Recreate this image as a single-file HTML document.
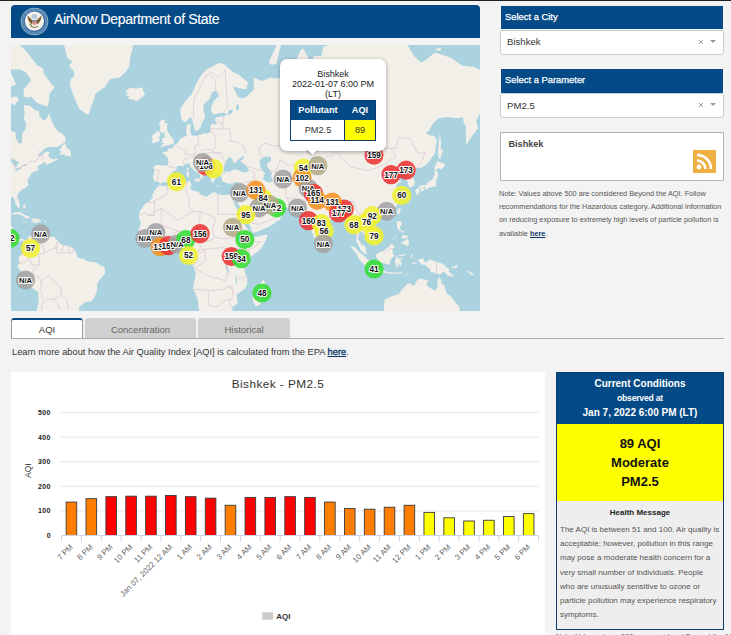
<!DOCTYPE html>
<html><head><meta charset="utf-8">
<style>
*{margin:0;padding:0;box-sizing:border-box}
html,body{width:731px;height:635px;overflow:hidden;background:#f3f3f3;font-family:"Liberation Sans",sans-serif;color:#333}
.a{position:absolute}
#topline{left:0;top:0;width:731px;height:1px;background:#222}
#hdr{left:11px;top:5px;width:469px;height:33px;background:#044a86;border-radius:4px 4px 0 0}
#hdr .t{left:43px;top:6.2px;font-size:14px;letter-spacing:-0.35px;color:#fff;white-space:nowrap;-webkit-text-stroke:0.12px #fff}
#map{left:11px;top:45px;width:469px;height:266px;background:#aad3df;overflow:hidden}
.sh{background:#044a86;color:#fff;font-size:9.4px;padding:0 0 0 4px;line-height:21.5px;white-space:nowrap;-webkit-text-stroke:0.25px #fff}
.sel{background:#fff;border:1px solid #ccc;border-radius:3px;font-size:9.6px;color:#333;padding-left:6px;white-space:nowrap}
.x{color:#999;font-size:10px}
.arr{width:0;height:0;border-left:3px solid transparent;border-right:3px solid transparent;border-top:3px solid #999}
#rss{left:500px;top:132px;width:224px;height:49px;background:#fff;border:1px solid #b5b5b5}
#note{left:499px;top:187px;width:230px;font-size:7.33px;line-height:13.2px;color:#555}
#note b{color:#0b3a6a;text-decoration:underline}
.tab{top:318px;height:21px;font-size:9.5px;text-align:center;line-height:21px;color:#666}
#tabline{left:11px;top:338px;width:713px;height:1px;background:#aaa}
#learn{left:12px;top:347px;font-size:9.3px;color:#333;white-space:nowrap}
#learn b{font-weight:normal;color:#0b3a6a;text-decoration:underline;-webkit-text-stroke:0.35px #0b3a6a}
#chart{left:11px;top:372px;width:534px;height:263px;background:#fff}
#cc{left:556px;top:372px;width:168px;height:258px;background:#eee;border:1px solid #0b3d6e}
#cch{left:0;top:0;width:166px;height:51px;background:#044a86;color:#fff;text-align:center;font-weight:bold}
#ccy{left:0;top:51px;width:166px;height:77px;background:#ffff00;color:#111;text-align:center;font-weight:bold;font-size:13px}
</style></head><body>
<div id="topline" class="a"></div>
<div id="hdr" class="a">
  <svg class="a" style="left:9px;top:2px" width="29" height="29" viewBox="0 0 29 29">
    <circle cx="14.5" cy="14.5" r="13.3" fill="#2f64a0" stroke="#8fb6c8" stroke-width="1.1"/>
    <circle cx="14.5" cy="14.5" r="11.4" fill="none" stroke="#5d89b8" stroke-width="2"/>
    <circle cx="14.4" cy="14.1" r="9.6" fill="#f4f2ea"/>
    <ellipse cx="14.4" cy="9.5" rx="3" ry="2.6" fill="#b9cbd8"/>
    <path d="M7.5,8.5 Q8,15 12,17.5 L13,14 Z" fill="#7a5a2a"/>
    <path d="M21.5,8.5 Q21,15 17,17.5 L16,14 Z" fill="#7a5a2a"/>
    <path d="M8.5,16.5 Q10,19 12.5,19.5 L11.5,17.5 Z" fill="#7f9a5a"/>
    <rect x="12.6" y="13.2" width="3.8" height="1.4" fill="#3d5f9c"/>
    <path d="M12.6,14.6 H16.4 V17 Q14.5,19.2 12.6,17 Z" fill="#e08a8a"/>
    <path d="M11,19.5 Q14.5,21.5 18,19.5" stroke="#6a5030" stroke-width="0.9" fill="none"/>
  </svg>
  <div class="a t">AirNow Department of State</div>
</div>
<div id="map" class="a"><svg class="a" style="left:0;top:0" width="469" height="266"><rect width="469" height="266" fill="#aad3df"/><g style="filter:blur(0.4px)"><path d="M-19.3,-7.2L-0.5,-3.6L8.9,-0.1L16.5,7.8L25.9,19.9L31.6,23.3L33.5,29.8L41.0,39.8L43.8,42.2L38.2,49.1L38.2,55.6L36.3,61.8L31.6,59.8L25.9,58.1L20.3,51.7L16.5,52.6L12.7,51.3L12.7,44.6L20.3,34.9L14.6,27.1L8.9,24.4L-0.5,24.4L-19.3,18.7ZM-4.2,53.5L5.2,51.3L8.0,54.3L3.3,60.6L-2.4,55.6ZM-28.8,34.9L-9.9,32.4L-0.5,27.1L5.2,39.8L-2.4,42.2L-6.1,53.5L-15.6,65.7L-17.4,75.1L-14.6,80.4L-6.1,82.1L-0.5,86.2L4.6,87.1L4.8,93.6L8.0,98.2L10.8,98.2L11.2,88.8L14.6,83.8L15.0,76.9L12.7,74.4L13.7,69.6L12.7,60.2L18.4,60.6L22.1,63.4L25.0,65.7L27.8,65.7L28.7,71.4L32.5,75.8L35.3,74.0L38.2,68.4L41.0,76.9L43.8,82.1L46.7,86.2L51.4,88.8L54.2,92.0L54.8,96.0L51.9,98.5L46.7,102.1L39.1,102.1L34.4,102.9L29.7,107.5L26.9,110.6L28.7,111.2L35.3,106.4L38.5,107.0L37.2,111.2L39.1,113.1L43.3,114.7L45.1,113.1L46.7,114.5L40.1,117.7L35.3,120.0L34.4,116.6L32.5,117.9L28.7,119.8L26.3,122.4L27.8,124.9L25.0,125.9L21.2,127.4L20.3,128.7L18.6,132.1L17.4,133.1L16.5,136.6L17.4,140.1L15.0,142.4L11.8,144.0L8.0,147.4L6.1,150.9L8.0,156.8L8.9,160.0L8.4,162.5L7.1,162.9L5.6,160.6L3.9,157.9L3.7,154.6L1.4,152.3L-2.4,151.8L-9.9,153.6L-28.8,156.8L-28.8,181.2L-6.1,181.6L-2.4,181.4L0.5,181.6L2.7,183.2L2.4,187.1L2.2,190.9L3.3,192.9L6.1,195.1L9.3,193.8L12.7,194.2L15.0,195.7L16.5,194.0L17.2,191.9L19.9,190.6L23.1,189.4L25.0,188.2L25.5,190.0L24.8,191.7L24.4,194.4L25.9,193.8L27.8,190.2L31.0,191.1L35.0,191.7L38.7,191.9L43.3,191.5L44.8,193.8L46.7,195.5L49.1,198.2L51.9,200.5L56.1,200.7L58.9,201.2L62.3,203.7L63.6,205.2L65.5,208.4L65.9,211.2L68.3,213.5L72.1,213.5L75.9,216.3L79.6,216.7L84.3,217.3L88.1,219.0L90.0,221.0L93.2,221.8L94.2,225.6L93.8,228.8L92.3,230.7L89.6,233.6L87.2,236.5L86.2,239.4L86.2,245.3L84.9,249.3L82.7,253.3L80.6,256.4L75.9,256.8L72.1,258.4L68.3,262.2L68.1,267.9L65.5,273.3L46.7,307.0L24.0,307.0L24.6,273.3L25.0,267.9L26.9,260.5L27.6,253.3L27.2,247.1L23.1,244.3L18.4,241.4L15.9,237.5L13.7,232.7L9.9,226.0L7.1,223.1L6.7,220.3L8.0,218.4L8.9,216.7L7.3,214.6L8.6,210.9L10.8,209.3L11.8,206.9L14.0,204.3L13.9,199.3L12.3,196.7L10.3,195.1L8.4,197.6L7.1,197.1L3.3,196.1L-1.8,193.0L-2.4,190.0L-5.6,187.1L-28.8,183.2ZM47.8,109.5L50.4,107.0L48.5,105.0L51.4,100.3L54.9,97.9L55.1,102.6L58.9,104.7L60.2,109.0L59.8,112.0L57.6,110.4L55.1,111.5L53.8,109.5ZM-0.3,169.5L3.3,167.4L8.9,167.0L13.7,169.7L17.2,171.3L19.9,172.9L14.6,173.5L13.3,171.9L9.9,170.1L5.2,168.9L1.8,169.7ZM19.5,173.7L22.5,173.5L27.8,173.9L30.8,176.1L27.8,176.9L24.6,177.9L19.3,176.7L22.7,176.3ZM12.2,176.5L15.9,177.3L14.8,177.7L12.3,176.9ZM33.1,176.3L36.1,176.5L35.7,177.3L33.1,177.3ZM12.7,159.3L14.6,159.8L14.2,163.1L12.3,164.1ZM22.1,-31.5L46.7,-75.5L103.2,-98.0L122.1,-75.5L137.1,-68.9L125.8,-22.8L123.9,-7.2L119.2,12.8L118.3,21.6L114.5,27.1L108.9,32.4L99.4,33.9L93.8,42.2L88.1,45.9L84.3,49.1L82.5,55.6L79.6,63.8L77.8,69.6L75.3,69.2L72.1,66.5L68.3,63.8L65.5,58.1L63.6,53.5L61.2,46.9L58.9,40.3L59.8,33.9L63.6,30.8L62.7,26.0L59.8,23.3L58.0,19.9L61.7,17.0L56.1,12.8L54.2,4.6L52.3,-3.6L46.7,-13.2L35.3,-14.7L22.1,-31.5ZM114.5,46.9L118.3,42.7L125.8,43.6L131.5,42.2L132.4,46.4L134.1,48.7L131.5,52.2L125.8,56.0L120.2,54.3L117.0,53.9L118.3,51.7L114.5,50.0L117.3,48.2ZM149.0,102.6L154.1,100.9L162.2,99.1L163.0,94.8L160.3,92.0L156.9,87.1L156.0,83.8L156.4,78.3L153.2,78.0L154.1,74.7L150.3,74.7L148.1,78.7L149.2,82.5L148.8,86.2L150.7,87.8L153.7,87.8L153.3,89.7L154.3,92.6L150.9,92.9L151.8,95.7L149.9,97.3L153.7,98.5L151.8,99.1ZM148.4,96.0L148.3,92.0L149.4,88.8L148.1,86.5L145.6,86.2L143.7,88.8L140.9,90.4L141.3,92.9L142.2,94.8L140.3,97.0L141.5,98.2L144.7,97.3ZM257.8,17.0L264.4,3.2L267.2,-7.2L276.6,-18.7L287.9,-27.1L272.9,-7.2L269.1,3.2L265.3,18.7L260.6,19.9ZM169.2,63.8L170.1,73.3L172.9,76.9L175.8,76.2L179.5,71.8L180.5,73.3L182.4,78.7L183.3,83.8L184.3,85.8L186.7,85.5L189.9,82.1L190.9,77.6L194.2,72.2L192.7,65.7L192.4,59.8L198.4,54.3L201.2,46.9L205.0,45.5L207.3,49.1L207.8,51.3L203.1,55.6L200.3,61.8L200.3,66.5L202.2,69.6L206.9,68.4L212.5,67.7L216.3,69.6L212.5,71.4L205.0,72.2L204.0,75.1L205.4,79.4L200.7,78.7L199.3,81.4L199.7,86.5L196.5,88.8L194.6,88.1L189.9,89.4L186.1,90.7L180.5,90.4L180.1,88.8L179.2,85.5L179.7,82.1L179.4,78.3L176.0,80.1L175.0,85.5L176.0,90.4L172.9,92.0L168.8,93.9L167.3,97.3L165.4,99.1L162.8,100.0L162.8,102.1L160.1,103.8L157.3,103.5L156.2,106.4L150.9,107.3L155.0,110.4L157.5,113.9L156.9,120.6L153.2,120.6L144.7,120.0L142.2,121.9L143.2,124.9L142.8,129.4L141.8,132.3L143.2,134.5L142.8,136.6L145.6,136.2L148.4,137.6L149.2,139.0L151.3,137.3L155.6,137.3L158.8,133.5L160.1,132.3L159.2,130.6L161.4,126.9L165.8,124.4L165.8,121.3L168.8,120.8L172.2,121.3L173.9,119.8L176.3,118.2L179.0,119.5L179.5,122.1L182.4,124.4L184.3,126.4L186.7,127.2L189.3,129.4L189.3,133.8L190.1,134.3L191.0,133.1L192.2,131.8L191.8,130.4L194.6,129.2L193.7,127.9L189.9,125.7L186.7,123.1L185.4,120.3L182.9,117.9L183.1,115.5L185.4,114.7L186.9,116.1L189.0,119.3L192.7,121.9L196.5,124.9L196.3,128.4L198.4,131.1L199.5,133.5L200.5,137.1L203.1,137.8L202.7,135.4L205.0,133.8L202.7,131.8L202.2,128.9L204.0,128.9L205.9,127.2L209.1,127.4L209.3,129.2L209.7,130.6L210.6,133.1L211.2,136.6L213.5,137.3L216.3,138.5L221.0,138.7L224.8,137.1L227.6,137.1L227.2,139.4L227.4,142.2L226.1,145.8L224.8,149.2L221.0,150.1L216.3,149.6L212.5,150.3L206.9,149.0L203.1,147.0L197.4,150.3L195.6,151.8L189.0,149.2L188.0,147.0L181.4,145.4L179.0,142.9L180.5,140.1L179.0,136.2L178.0,135.9L175.8,136.9L169.2,137.1L165.4,137.1L159.8,139.4L156.0,141.1L150.3,140.8L148.6,139.4L147.5,141.3L143.7,145.2L141.3,150.3L141.7,152.7L138.1,156.4L135.2,157.6L132.4,161.0L129.6,165.2L127.7,171.3L128.6,174.3L129.6,178.3L128.5,183.2L126.8,183.8L128.3,186.1L128.1,188.2L131.5,190.9L134.3,193.8L136.2,197.1L139.0,199.0L145.6,203.5L152.2,202.0L156.0,202.7L161.6,200.7L164.5,199.9L168.2,199.9L171.1,203.7L172.9,203.5L175.8,203.1L177.7,204.6L178.2,207.5L177.7,209.9L177.3,213.7L178.6,217.1L182.0,220.3L182.9,223.3L184.8,228.5L184.3,232.7L182.7,238.5L182.0,243.9L183.9,247.3L186.9,255.3L187.5,262.6L188.6,267.9L189.9,282.3L216.3,282.3L221.6,266.8L221.2,262.6L222.0,261.5L226.7,258.4L226.3,254.3L225.2,249.7L228.6,247.7L234.2,243.3L236.3,239.4L236.1,231.7L233.8,226.9L233.6,224.1L232.9,223.1L234.2,220.7L236.7,216.5L238.9,213.7L242.7,209.0L246.5,207.1L250.2,203.3L253.1,198.6L255.5,193.8L256.5,189.4L253.1,190.2L249.3,190.7L244.6,191.9L242.7,192.1L241.4,190.0L240.2,188.0L238.0,185.3L235.2,182.6L233.8,180.3L232.3,177.3L230.1,171.3L229.3,169.3L226.9,166.2L226.1,164.1L223.7,159.8L221.0,152.9L221.2,152.7L222.9,156.1L224.4,157.0L225.3,153.6L225.7,156.8L228.6,161.0L230.4,164.6L233.3,169.3L234.2,172.7L237.4,178.3L239.9,182.2L241.4,187.7L244.6,187.5L250.2,185.1L255.9,182.8L258.1,181.8L263.4,178.3L267.2,175.5L268.7,175.3L270.0,172.3L272.5,168.5L270.4,166.0L267.2,165.2L266.1,163.3L265.9,160.4L264.4,162.1L261.5,164.8L258.7,164.8L256.8,164.1L256.3,160.8L255.3,162.3L254.0,160.4L251.2,156.8L250.2,152.5L251.9,151.8L254.0,152.5L256.3,156.8L260.6,159.1L266.3,158.7L267.8,161.6L275.7,162.7L281.3,162.7L285.3,162.3L287.0,165.2L288.9,166.2L292.3,168.1L289.6,168.7L291.7,171.3L297.0,171.3L297.0,175.3L298.3,181.2L300.2,185.1L302.1,190.0L304.0,193.8L305.8,196.7L307.2,195.0L309.2,192.3L310.2,190.0L311.1,186.1L310.7,182.2L313.4,180.7L314.9,179.3L319.0,175.3L323.6,171.9L323.7,170.3L326.6,169.7L328.5,169.3L331.3,168.3L332.8,168.7L333.7,171.3L334.1,173.3L336.9,176.3L337.9,180.3L339.8,181.6L343.5,180.3L343.7,183.2L345.4,187.1L345.6,192.9L345.0,195.7L347.3,199.9L348.8,202.4L350.1,206.1L354.7,209.3L356.2,209.2L354.8,206.1L354.7,202.7L352.6,200.1L350.1,199.0L348.8,196.1L346.7,194.4L348.1,188.0L349.9,186.3L353.0,189.0L354.8,191.9L357.7,195.5L360.9,192.1L365.2,190.0L365.8,186.1L364.6,182.2L360.5,178.3L359.0,175.3L360.7,172.3L363.3,170.3L366.7,170.3L368.0,172.7L369.0,170.3L373.7,168.9L376.5,167.8L380.3,166.2L385.2,161.4L386.9,157.9L389.7,153.6L389.0,150.3L387.8,147.0L385.0,141.3L386.9,138.5L390.7,136.6L387.8,135.0L384.1,136.2L383.1,133.1L381.4,131.8L383.1,131.4L387.8,127.2L388.8,131.8L390.7,128.7L394.1,129.4L395.8,135.0L398.4,142.7L402.0,141.5L403.5,139.4L403.9,136.6L402.0,133.1L400.1,129.9L403.9,127.2L404.2,123.4L406.7,122.9L410.5,122.4L415.2,119.8L418.9,115.3L424.2,107.5L424.6,101.2L426.1,95.1L422.7,90.4L418.9,90.4L414.8,88.1L418.0,85.5L421.8,78.7L427.4,73.3L434.0,72.2L439.7,72.2L446.3,73.3L451.9,72.2L452.9,78.7L454.8,80.4L455.1,99.7L458.5,95.1L461.4,90.4L465.1,85.5L467.4,83.5L465.1,76.9L467.9,69.9L472.7,67.7L480.2,69.6L489.6,61.8L499.1,49.1L499.1,29.8L480.2,25.5L470.8,26.0L463.4,22.1L451.0,20.5L439.9,12.8L428.7,9.1L423.6,7.8L416.1,14.0L410.1,17.6L402.9,10.9L395.4,-2.2L385.9,-2.2L372.8,-4.3L367.1,-14.7L348.2,-18.7L323.7,-3.6L320.0,-0.1L312.4,1.2L310.6,10.9L302.1,10.9L304.0,29.8L308.7,32.4L304.9,34.9L300.2,37.4L296.4,42.2L298.3,32.4L296.4,21.6L297.4,12.8L291.7,3.2L288.9,6.5L285.7,14.0L287.9,19.9L287.9,32.4L282.3,28.2L274.7,25.5L271.0,32.4L263.4,33.4L259.7,32.4L251.2,35.9L246.5,33.9L242.7,32.4L242.7,44.6L236.1,51.3L231.4,53.5L227.6,52.2L225.3,49.1L222.0,41.3L224.8,42.2L229.5,43.6L235.2,44.6L237.0,37.4L227.6,29.8L222.0,27.1L212.5,18.7L207.8,18.1L201.2,21.6L195.6,24.4L191.8,28.2L188.0,33.4L184.3,40.8L180.5,49.5L174.8,55.6ZM423.6,4.6L430.2,2.6L429.3,5.9ZM310.2,200.1L310.4,196.3L310.9,193.2L312.8,195.7L314.1,198.2L313.6,199.9L311.7,200.7ZM386.1,167.2L387.5,169.5L388.8,168.3L389.7,163.1L388.8,162.5L386.3,165.2ZM364.5,174.9L367.1,173.1L369.0,173.9L368.0,176.3L366.2,176.9L364.5,176.3ZM404.2,145.4L405.7,143.6L408.2,144.0L408.6,147.0L407.3,149.6L405.9,150.3L405.2,148.1ZM409.5,145.8L409.7,143.6L413.7,143.1L412.7,145.4L410.5,146.3ZM406.7,142.9L410.5,140.1L415.2,139.9L417.1,137.1L418.6,135.9L420.8,135.0L423.6,129.9L423.6,126.4L426.5,126.2L427.4,130.6L425.5,134.3L425.2,137.8L425.2,141.1L423.1,141.5L421.4,142.2L418.0,142.4L416.1,144.7L414.2,143.8L414.6,142.0L411.4,142.7L408.6,143.8ZM423.6,125.7L423.3,123.1L426.5,115.8L428.4,117.1L433.6,118.5L434.0,121.1L430.2,124.4L426.9,122.9L425.3,125.2ZM427.8,113.9L427.0,107.0L427.6,99.7L428.7,89.4L429.9,95.1L429.7,104.1L432.1,106.1L429.7,111.2L430.2,113.1ZM385.9,176.3L390.1,176.3L390.7,179.3L388.8,182.2L389.7,185.1L393.5,187.1L392.5,188.0L388.8,185.5L387.1,184.6L385.9,181.2ZM389.7,198.6L393.5,195.7L396.3,193.4L398.2,196.7L397.6,199.9L396.1,201.2L393.5,199.5ZM390.7,190.9L392.9,190.2L396.3,190.4L396.9,192.9L393.5,193.2L390.7,193.8ZM380.9,195.7L385.0,191.9L385.4,190.4L383.1,192.9ZM365.2,209.0L367.1,208.4L369.0,206.9L372.8,206.0L375.6,203.3L377.5,202.0L379.4,199.5L381.2,199.0L384.1,201.8L382.2,203.3L381.4,205.2L382.2,209.9L384.1,210.1L381.2,212.7L379.4,215.6L378.8,219.2L375.6,219.5L372.8,218.0L370.1,218.2L367.5,217.3L367.1,214.6L365.2,212.7ZM339.4,201.2L343.5,202.0L345.8,204.8L349.2,208.0L352.0,209.9L355.4,212.7L356.7,214.6L359.6,217.5L359.2,222.8L356.7,222.4L352.6,219.3L350.1,216.5L347.3,212.7L345.4,208.6L342.6,205.2ZM358.1,224.6L360.5,223.1L363.3,223.7L368.0,224.6L371.8,224.8L375.6,226.5L375.6,228.3L369.0,227.3L363.3,226.5L359.6,225.8ZM376.5,227.3L384.1,227.5L391.6,227.5L391.6,228.5L382.2,228.8L376.5,228.5ZM393.5,229.8L399.1,227.5L397.3,228.8L393.5,231.1ZM385.0,222.2L384.8,218.4L383.7,216.9L385.2,211.8L386.9,210.7L389.7,209.9L394.4,209.0L395.4,209.3L391.6,211.0L386.9,211.0L386.5,213.3L388.8,213.5L392.4,213.5L389.3,215.2L390.7,218.4L389.7,220.9L387.8,219.7L386.9,217.5L386.7,222.2ZM400.1,208.0L401.0,209.9L402.3,209.0L401.0,211.8L402.0,213.3L400.1,212.7ZM401.0,217.5L406.3,217.8L404.8,219.0L401.0,218.6ZM406.7,214.6L412.3,213.3L414.2,218.0L418.9,214.6L425.5,216.7L432.1,219.0L435.0,222.2L438.4,223.7L437.8,226.9L440.6,228.8L443.6,231.7L436.8,230.7L433.1,226.5L429.3,229.2L425.5,229.0L421.8,227.1L419.9,227.7L418.9,224.1L414.2,220.3L410.5,219.3L408.6,217.3ZM439.7,222.2L443.4,221.2L446.3,219.7L446.6,222.2L442.5,223.5ZM372.8,262.6L373.7,254.3L375.6,253.9L379.7,251.5L384.1,250.3L387.8,249.3L390.3,245.3L392.5,242.9L395.4,239.8L398.8,238.1L401.4,240.4L403.9,240.2L405.2,236.5L406.7,235.0L409.7,233.6L414.2,235.0L417.6,235.2L416.1,237.5L415.2,240.4L418.9,242.8L422.3,245.1L425.2,245.1L426.7,240.4L426.5,236.1L428.4,232.1L430.2,235.6L430.8,239.0L433.6,240.2L434.0,243.3L435.5,248.3L440.0,251.3L442.5,254.7L445.3,258.4L448.2,261.5L449.1,267.9L449.3,275.5L442.5,289.3L376.5,282.3ZM252.7,234.6L254.9,241.4L253.1,244.3L251.2,250.3L249.3,259.5L244.6,261.5L242.1,256.4L241.4,253.3L243.6,248.3L242.7,244.3L247.0,242.2L250.0,237.5ZM220.6,142.0L222.0,140.6L224.8,139.9L223.8,141.5L222.0,142.2ZM204.0,140.6L209.3,140.8L208.8,141.3L205.0,141.3ZM183.1,134.7L184.3,133.8L189.2,133.5L188.2,136.6L184.6,136.4ZM175.2,127.2L177.7,126.4L178.2,129.4L177.7,131.8L175.8,131.8L175.6,129.4ZM176.0,123.4L177.5,121.9L177.7,124.4L176.9,125.9L176.0,124.9ZM455.7,225.0L459.5,226.9L462.9,229.8L461.4,230.4L456.6,226.9Z" fill="#f2efe9"/><path d="M212.5,126.4L213.5,120.6L213.7,118.5L215.7,115.8L217.2,112.6L219.1,112.3L221.0,113.9L222.9,116.1L221.0,115.5L222.9,118.2L225.7,117.1L225.7,115.8L226.7,115.3L229.5,112.6L233.3,110.6L231.8,113.9L230.4,115.8L228.7,115.5L230.4,117.4L232.3,118.5L235.2,120.8L238.2,125.4L235.2,127.2L231.4,126.9L227.6,125.2L225.7,124.4L222.0,124.7L218.6,126.7L214.4,126.4ZM252.1,112.6L255.9,111.2L259.7,111.7L260.2,115.8L256.5,117.9L255.9,121.3L258.7,124.4L259.7,126.9L261.2,128.2L259.7,131.1L261.5,134.3L261.4,136.6L257.8,137.6L254.6,136.2L252.1,134.3L253.1,129.4L254.8,128.7L253.1,127.4L251.4,124.9L249.3,121.9L249.3,117.9L248.0,117.7L249.3,114.7ZM209.7,128.4L214.4,126.9L215.4,127.7L211.6,128.7ZM216.3,69.6L218.2,64.6L222.0,65.0L221.6,67.7L218.2,69.9ZM224.8,65.0L225.7,58.9L228.0,60.6L227.6,65.0ZM298.3,115.3L301.1,112.0L308.7,112.6L306.8,113.4L301.1,113.4ZM355.4,97.9L358.6,95.1L364.3,88.8L366.7,84.8L366.2,86.5L362.4,93.6L357.7,97.3ZM219.3,212.4L221.0,211.2L223.8,211.8L224.2,213.7L222.0,216.5L219.7,215.0ZM214.8,218.0L217.2,224.1L218.6,227.9L217.6,228.3L215.4,224.5L214.4,220.3ZM223.8,229.8L225.5,233.6L226.1,239.0L225.0,238.5L224.4,234.6ZM185.2,187.1L187.1,185.7L187.1,187.5L185.8,187.9ZM-0.1,114.5L2.4,114.2L5.2,116.1L8.0,116.9L5.7,121.3L4.2,121.9L1.4,118.5L-0.1,116.6ZM2.5,125.2L7.1,122.9L10.8,122.1L9.9,123.6L6.1,125.7ZM9.3,121.1L14.6,119.3L16.1,120.6L12.7,121.1ZM-13.7,111.7L-8.0,107.0L-2.4,106.1L0.5,111.2L-4.2,112.6ZM20.3,101.2L22.1,98.8L21.2,101.5Z" fill="#aad3df"/><path d="M-19.3,105.5L-8.0,108.4L0.5,112.6L4.2,115.8L4.2,124.4L10.8,122.1L10.8,121.1L16.5,119.3L18.9,116.6L25.0,116.6L27.8,112.0L29.7,110.1L31.9,111.2L31.9,116.1M24.0,189.0L23.1,198.6L32.5,200.5L33.5,208.0L27.8,209.0L28.7,219.7L22.1,225.0L23.1,230.7L28.7,232.7L29.7,236.5L30.6,240.4L29.7,245.3L31.6,253.3L33.5,256.4L30.6,260.5L30.6,266.8M10.8,209.0L17.4,211.8L18.4,213.7L21.2,220.3L27.8,219.3L28.7,219.7M7.1,218.4L12.7,217.5L18.0,213.7M29.7,236.5L37.2,230.7L44.8,237.5L50.4,244.3L50.4,250.3L42.9,254.3L35.3,254.3M46.7,195.7L44.8,202.4L46.7,208.0L54.2,208.0L61.7,207.7L62.7,203.7M52.3,200.5L50.4,208.0M58.0,200.8L58.0,207.7M33.5,208.0L39.1,204.3L46.7,202.4M50.4,250.3L56.1,255.3L57.0,261.5L58.0,264.7M42.9,254.3L46.7,258.4L49.5,264.7M156.4,141.3L156.9,148.1L150.3,152.5L143.4,155.5L143.4,157.4L135.2,157.4M143.4,157.4L143.4,170.3L137.1,170.7L135.2,167.2L128.6,170.7M137.1,170.7L150.3,163.1L167.3,175.3L182.4,166.2L188.0,166.2L205.0,173.3M175.8,136.6L174.8,145.8L177.7,152.5L178.6,163.1L182.4,166.2M206.9,149.0L206.9,169.3L229.5,169.3M205.0,173.3L201.2,183.2L203.1,191.9L210.6,193.8L222.0,192.9L225.7,191.9M224.8,192.9L227.6,185.1L229.5,183.2L233.3,184.2L240.8,188.0M239.9,190.9L244.6,196.7L250.2,196.7L242.7,202.4L238.0,204.3L233.3,205.2L227.6,203.3L223.8,203.3M238.0,204.3L237.0,214.6M223.8,213.7L234.2,220.7M216.3,214.6L217.2,209.0L219.1,204.6L223.8,203.3M236.1,231.7L225.7,233.6M183.3,223.1L189.9,226.9L201.2,232.7L205.0,232.7L210.6,234.6L214.4,236.5L216.3,226.9L215.4,221.2L214.4,214.6L216.3,214.6M182.4,244.3L197.4,245.3L204.0,246.3M197.4,246.3L197.4,254.3L197.4,260.5M201.2,245.3L212.5,244.3L216.3,241.4L222.0,242.4M216.3,241.4L222.0,244.3L221.0,253.3L218.2,254.9M197.4,260.5L206.9,261.5L214.4,254.9L218.2,254.9L220.1,263.6M164.8,199.9L166.3,190.0L167.3,186.1L178.6,186.5L185.2,185.5L187.1,189.0L184.3,196.7L181.4,199.5L176.1,203.1M187.1,189.0L188.0,196.7L189.9,202.4L187.1,206.1L189.9,208.0L193.7,205.2L194.6,215.6L189.9,219.3L183.3,223.1M178.2,207.5L181.1,207.7L181.4,209.9L186.1,209.0L187.1,216.5L182.0,220.3M137.1,183.2L150.3,180.3L150.3,163.1M189.0,166.2L189.0,173.3L185.2,185.5M187.1,193.8L193.7,196.7L203.1,193.8M189.9,204.3L195.6,204.3L205.0,203.3L211.6,202.4L218.2,204.6M150.3,180.3L159.8,183.2L167.3,186.1M137.1,183.2L138.1,188.0L144.7,192.9L150.3,191.9L154.1,190.9L159.8,190.9L161.6,189.0L167.3,186.1M144.7,192.9L144.7,197.6L145.6,203.5M154.1,190.9L154.5,202.4M159.8,190.9L162.0,200.5M240.8,178.3L248.3,179.3L257.8,175.3L264.7,173.3M263.4,168.3L265.3,164.1M228.6,152.5L233.3,148.1L238.9,150.3L246.5,154.6L250.2,154.6M250.2,152.5L246.5,145.8L245.5,141.3L243.6,135.9M228.6,138.3L238.9,136.2L243.6,135.9L242.7,130.6L244.2,130.1M233.3,148.1L232.3,144.7L238.9,136.2M226.9,145.8L228.6,152.5L225.7,153.6M274.7,136.6L274.7,152.5L276.6,153.6L278.5,162.7M274.7,152.5L278.5,153.6L284.2,153.6L286.0,150.3L290.8,144.7L293.6,139.0L299.2,136.6L302.1,136.6M287.9,165.2L291.7,163.1L293.6,157.9L299.2,148.1L301.1,141.3L304.9,140.1M261.4,136.6L265.3,134.3L272.9,135.4L274.7,136.6L280.4,133.1L285.1,135.4L291.7,135.4L299.2,136.6M258.7,125.7L265.3,126.2L269.1,115.3L274.7,117.9L276.6,120.6L283.2,120.0L287.9,126.9L293.6,123.1L299.2,122.4L310.6,122.4L311.5,116.6L316.2,111.2L320.9,111.2L324.7,105.5M324.7,105.5L310.6,100.3L304.9,90.4L297.4,90.4L291.7,87.1L282.3,88.8L274.7,92.0L274.7,99.7L263.4,101.2L254.0,98.2L248.3,102.6L248.3,109.2L252.1,112.6M324.7,105.5L333.2,101.2L344.5,96.7L352.0,101.2L361.4,102.6L369.0,104.1L378.4,103.2L385.0,103.2M324.7,105.5L331.3,113.9L340.7,121.9L357.7,125.7L370.9,120.6L385.0,111.2L380.3,104.1M385.0,102.6L387.8,92.6L399.1,93.6L406.7,108.4L414.2,107.3L410.5,116.6L406.7,121.9L405.9,123.4M394.1,129.4L398.2,125.7L402.9,124.4L405.9,123.4M310.6,122.4L303.0,128.4L299.2,131.8L301.1,136.6L304.9,140.1M306.8,140.1L308.7,147.0L312.4,152.5L318.1,155.7L325.6,157.9L333.2,157.2L342.6,156.4M312.4,152.5L310.6,155.7L318.1,158.9L325.6,160.0M342.6,156.8L345.4,165.2L349.2,170.3L352.0,168.3L359.6,167.6L363.3,170.3M345.4,192.9L346.4,183.2L345.4,179.3L348.2,173.3L350.1,170.3M348.2,173.3L351.1,178.3L355.8,177.3L358.6,183.2L353.0,185.1L353.0,189.0M352.0,168.3L355.8,173.3L360.5,179.3L362.4,184.2L359.6,190.9M325.6,160.0L327.5,169.3M334.1,171.3L333.2,164.1L327.5,161.0M334.1,171.3L336.0,165.2L338.8,160.0L343.5,156.8M350.1,199.5L352.0,200.5M204.0,96.7L204.0,89.4L199.3,86.5M235.2,108.4L231.4,99.7L223.8,96.7L218.2,95.7M219.1,96.7L220.1,92.0L218.2,83.8L212.5,83.8L211.6,78.7L212.5,71.4M199.3,83.8L208.8,83.8L212.5,83.8M200.3,78.7L206.9,76.9L211.6,78.7M212.5,67.7L216.3,61.8L215.4,44.6L214.4,29.8L213.5,24.4M182.4,73.3L182.4,63.8L183.3,53.5L188.0,44.6L193.7,32.4L197.4,29.8L199.3,27.1M205.0,45.5L204.0,34.9L198.4,29.8M199.3,27.1L206.9,32.4L212.5,27.1M156.4,121.1L165.8,123.4M173.9,109.5L175.2,105.5L171.4,104.1L168.2,102.6L164.5,99.7M186.7,90.7L187.5,96.7L188.0,99.7L182.9,101.8L185.2,106.7L183.7,109.2L178.6,109.8L176.0,109.0L173.9,109.5M172.9,119.8L172.6,115.3L173.1,113.9L176.7,113.9L179.5,112.6L183.3,111.2L185.6,112.6M143.0,124.7L148.1,125.4L146.6,131.8L145.8,136.2M185.6,112.6L190.9,112.6L195.6,114.2L201.2,119.3L202.2,123.6L198.4,124.4L199.3,127.4L203.1,126.2L208.8,125.2L212.5,124.4M202.2,108.4L209.7,107.5L212.9,115.3L215.7,115.8M189.9,105.5L195.2,104.1L202.2,105.5L205.0,101.2L204.0,96.7M191.8,108.4L202.2,107.0L208.8,108.4M238.2,125.4L241.7,126.9L244.2,130.1M230.4,116.6L235.2,120.8L247.4,124.9L252.1,124.9M-23.1,161.2L-36.3,153.6M-13.7,184.2L-9.0,185.1L-6.1,186.1L-4.2,187.1L-0.5,185.1L2.4,183.2M-1.8,190.9L2.2,191.1M3.3,196.1L3.5,193.6M13.7,197.6L14.0,195.3M213.5,216.5L214.4,214.6L215.4,213.7M372.8,209.0L376.5,205.2L379.4,203.7L382.2,203.3M425.5,216.7L425.5,229.0M394.4,229.2L395.4,229.8" fill="none" stroke="#d6bccb" stroke-width="0.6"/></g><circle cx="-1.0" cy="193.3" r="9.6" fill="#33dd33" fill-opacity="0.88"/><circle cx="29.6" cy="188.9" r="9.6" fill="#a3a3a3" fill-opacity="0.88"/><circle cx="19.5" cy="203.4" r="9.6" fill="#f0f030" fill-opacity="0.88"/><circle cx="14.5" cy="235.0" r="9.6" fill="#a3a3a3" fill-opacity="0.88"/><circle cx="165.4" cy="136.7" r="9.6" fill="#f0f030" fill-opacity="0.88"/><circle cx="195.0" cy="121.0" r="9.6" fill="#ee3333" fill-opacity="0.88"/><circle cx="202.6" cy="123.6" r="9.6" fill="#f0f030" fill-opacity="0.88"/><circle cx="191.5" cy="117.5" r="9.6" fill="#a3a3a3" fill-opacity="0.88"/><circle cx="133.8" cy="193.5" r="9.6" fill="#a3a3a3" fill-opacity="0.88"/><circle cx="144.8" cy="187.5" r="9.6" fill="#a3a3a3" fill-opacity="0.88"/><circle cx="149.2" cy="201.7" r="9.6" fill="#f59322" fill-opacity="0.88"/><circle cx="157.4" cy="200.6" r="9.6" fill="#ee3333" fill-opacity="0.88"/><circle cx="166.1" cy="199.0" r="9.6" fill="#a3a3a3" fill-opacity="0.88"/><circle cx="174.9" cy="194.6" r="9.6" fill="#33dd33" fill-opacity="0.88"/><circle cx="189.1" cy="188.6" r="9.6" fill="#ee3333" fill-opacity="0.88"/><circle cx="177.6" cy="210.5" r="9.6" fill="#f0f030" fill-opacity="0.88"/><circle cx="228.5" cy="147.7" r="9.6" fill="#a3a3a3" fill-opacity="0.88"/><circle cx="252.0" cy="153.5" r="9.6" fill="#f0f030" fill-opacity="0.88"/><circle cx="244.9" cy="145.2" r="9.6" fill="#f59322" fill-opacity="0.88"/><circle cx="265.7" cy="162.8" r="9.6" fill="#33dd33" fill-opacity="0.88"/><circle cx="258.7" cy="159.6" r="9.6" fill="#b3ad8a" fill-opacity="0.88"/><circle cx="248.0" cy="162.8" r="9.6" fill="#a3a3a3" fill-opacity="0.88"/><circle cx="234.8" cy="169.7" r="9.6" fill="#f0f030" fill-opacity="0.88"/><circle cx="221.6" cy="182.3" r="9.6" fill="#b3ad8a" fill-opacity="0.88"/><circle cx="233.8" cy="194.5" r="9.6" fill="#33dd33" fill-opacity="0.88"/><circle cx="220.3" cy="211.5" r="9.6" fill="#ee3333" fill-opacity="0.88"/><circle cx="230.2" cy="213.6" r="9.6" fill="#33dd33" fill-opacity="0.88"/><circle cx="251.0" cy="248.0" r="9.6" fill="#33dd33" fill-opacity="0.88"/><circle cx="272.0" cy="134.0" r="9.6" fill="#a3a3a3" fill-opacity="0.88"/><circle cx="286.5" cy="163.0" r="9.6" fill="#a3a3a3" fill-opacity="0.88"/><circle cx="292.3" cy="123.0" r="9.6" fill="#f0f030" fill-opacity="0.88"/><circle cx="306.8" cy="120.7" r="9.6" fill="#b3ad8a" fill-opacity="0.88"/><circle cx="291.0" cy="132.7" r="9.6" fill="#f59322" fill-opacity="0.88"/><circle cx="297.3" cy="143.4" r="9.6" fill="#a3a3a3" fill-opacity="0.88"/><circle cx="302.4" cy="148.4" r="9.6" fill="#ee3333" fill-opacity="0.88"/><circle cx="306.2" cy="155.3" r="9.6" fill="#f59322" fill-opacity="0.88"/><circle cx="333.2" cy="164.2" r="9.6" fill="#ee3333" fill-opacity="0.88"/><circle cx="321.3" cy="157.2" r="9.6" fill="#f59322" fill-opacity="0.88"/><circle cx="327.6" cy="168.0" r="9.6" fill="#ee3333" fill-opacity="0.88"/><circle cx="297.5" cy="175.6" r="9.6" fill="#ee3333" fill-opacity="0.88"/><circle cx="313.1" cy="185.9" r="9.6" fill="#f0f030" fill-opacity="0.88"/><circle cx="310.2" cy="178.5" r="9.6" fill="#f0f030" fill-opacity="0.88"/><circle cx="312.3" cy="198.6" r="9.6" fill="#a3a3a3" fill-opacity="0.88"/><circle cx="342.9" cy="179.6" r="9.6" fill="#f0f030" fill-opacity="0.88"/><circle cx="363.0" cy="110.1" r="9.6" fill="#ee3333" fill-opacity="0.88"/><circle cx="380.0" cy="129.6" r="9.6" fill="#ee3333" fill-opacity="0.88"/><circle cx="395.1" cy="125.2" r="9.6" fill="#ee3333" fill-opacity="0.88"/><circle cx="390.7" cy="150.4" r="9.6" fill="#f0f030" fill-opacity="0.88"/><circle cx="375.6" cy="166.3" r="9.6" fill="#a3a3a3" fill-opacity="0.88"/><circle cx="361.2" cy="170.7" r="9.6" fill="#f0f030" fill-opacity="0.88"/><circle cx="355.5" cy="177.1" r="9.6" fill="#f0f030" fill-opacity="0.88"/><circle cx="363.1" cy="190.9" r="9.6" fill="#f0f030" fill-opacity="0.88"/><circle cx="363.1" cy="224.0" r="9.6" fill="#33dd33" fill-opacity="0.88"/><text x="-1.0" y="196.2" text-anchor="middle" font-size="8.2" font-weight="bold" fill="#111" stroke="#fff" stroke-width="2" paint-order="stroke" stroke-linejoin="round">42</text><text x="29.6" y="191.8" text-anchor="middle" font-size="7.6" font-weight="bold" fill="#111" stroke="#fff" stroke-width="2" paint-order="stroke" stroke-linejoin="round">N/A</text><text x="19.5" y="206.3" text-anchor="middle" font-size="8.2" font-weight="bold" fill="#111" stroke="#fff" stroke-width="2" paint-order="stroke" stroke-linejoin="round">57</text><text x="14.5" y="237.9" text-anchor="middle" font-size="7.6" font-weight="bold" fill="#111" stroke="#fff" stroke-width="2" paint-order="stroke" stroke-linejoin="round">N/A</text><text x="165.4" y="139.6" text-anchor="middle" font-size="8.2" font-weight="bold" fill="#111" stroke="#fff" stroke-width="2" paint-order="stroke" stroke-linejoin="round">61</text><text x="195.0" y="123.9" text-anchor="middle" font-size="8.2" font-weight="bold" fill="#111" stroke="#fff" stroke-width="2" paint-order="stroke" stroke-linejoin="round">106</text><text x="202.6" y="126.5" text-anchor="middle" font-size="8.2" font-weight="bold" fill="#111" stroke="#fff" stroke-width="2" paint-order="stroke" stroke-linejoin="round"></text><text x="191.5" y="120.4" text-anchor="middle" font-size="7.6" font-weight="bold" fill="#111" stroke="#fff" stroke-width="2" paint-order="stroke" stroke-linejoin="round">N/A</text><text x="133.8" y="196.4" text-anchor="middle" font-size="7.6" font-weight="bold" fill="#111" stroke="#fff" stroke-width="2" paint-order="stroke" stroke-linejoin="round">N/A</text><text x="144.8" y="190.4" text-anchor="middle" font-size="7.6" font-weight="bold" fill="#111" stroke="#fff" stroke-width="2" paint-order="stroke" stroke-linejoin="round">N/A</text><text x="149.2" y="204.6" text-anchor="middle" font-size="8.2" font-weight="bold" fill="#111" stroke="#fff" stroke-width="2" paint-order="stroke" stroke-linejoin="round">131</text><text x="157.4" y="203.5" text-anchor="middle" font-size="8.2" font-weight="bold" fill="#111" stroke="#fff" stroke-width="2" paint-order="stroke" stroke-linejoin="round">159</text><text x="166.1" y="201.9" text-anchor="middle" font-size="7.6" font-weight="bold" fill="#111" stroke="#fff" stroke-width="2" paint-order="stroke" stroke-linejoin="round">N/A</text><text x="174.9" y="197.5" text-anchor="middle" font-size="8.2" font-weight="bold" fill="#111" stroke="#fff" stroke-width="2" paint-order="stroke" stroke-linejoin="round">68</text><text x="189.1" y="191.5" text-anchor="middle" font-size="8.2" font-weight="bold" fill="#111" stroke="#fff" stroke-width="2" paint-order="stroke" stroke-linejoin="round">156</text><text x="177.6" y="213.4" text-anchor="middle" font-size="8.2" font-weight="bold" fill="#111" stroke="#fff" stroke-width="2" paint-order="stroke" stroke-linejoin="round">52</text><text x="228.5" y="150.6" text-anchor="middle" font-size="7.6" font-weight="bold" fill="#111" stroke="#fff" stroke-width="2" paint-order="stroke" stroke-linejoin="round">N/A</text><text x="252.0" y="156.4" text-anchor="middle" font-size="8.2" font-weight="bold" fill="#111" stroke="#fff" stroke-width="2" paint-order="stroke" stroke-linejoin="round">84</text><text x="244.9" y="148.1" text-anchor="middle" font-size="8.2" font-weight="bold" fill="#111" stroke="#fff" stroke-width="2" paint-order="stroke" stroke-linejoin="round">131</text><text x="265.7" y="165.7" text-anchor="middle" font-size="8.2" font-weight="bold" fill="#111" stroke="#fff" stroke-width="2" paint-order="stroke" stroke-linejoin="round">72</text><text x="258.7" y="162.5" text-anchor="middle" font-size="7.6" font-weight="bold" fill="#111" stroke="#fff" stroke-width="2" paint-order="stroke" stroke-linejoin="round">N/A</text><text x="248.0" y="165.7" text-anchor="middle" font-size="7.6" font-weight="bold" fill="#111" stroke="#fff" stroke-width="2" paint-order="stroke" stroke-linejoin="round">N/A</text><text x="234.8" y="172.6" text-anchor="middle" font-size="8.2" font-weight="bold" fill="#111" stroke="#fff" stroke-width="2" paint-order="stroke" stroke-linejoin="round">95</text><text x="221.6" y="185.2" text-anchor="middle" font-size="7.6" font-weight="bold" fill="#111" stroke="#fff" stroke-width="2" paint-order="stroke" stroke-linejoin="round">N/A</text><text x="233.8" y="197.4" text-anchor="middle" font-size="8.2" font-weight="bold" fill="#111" stroke="#fff" stroke-width="2" paint-order="stroke" stroke-linejoin="round">50</text><text x="220.3" y="214.4" text-anchor="middle" font-size="8.2" font-weight="bold" fill="#111" stroke="#fff" stroke-width="2" paint-order="stroke" stroke-linejoin="round">159</text><text x="230.2" y="216.5" text-anchor="middle" font-size="8.2" font-weight="bold" fill="#111" stroke="#fff" stroke-width="2" paint-order="stroke" stroke-linejoin="round">34</text><text x="251.0" y="250.9" text-anchor="middle" font-size="8.2" font-weight="bold" fill="#111" stroke="#fff" stroke-width="2" paint-order="stroke" stroke-linejoin="round">48</text><text x="272.0" y="136.9" text-anchor="middle" font-size="7.6" font-weight="bold" fill="#111" stroke="#fff" stroke-width="2" paint-order="stroke" stroke-linejoin="round">N/A</text><text x="286.5" y="165.9" text-anchor="middle" font-size="7.6" font-weight="bold" fill="#111" stroke="#fff" stroke-width="2" paint-order="stroke" stroke-linejoin="round">N/A</text><text x="292.3" y="125.9" text-anchor="middle" font-size="8.2" font-weight="bold" fill="#111" stroke="#fff" stroke-width="2" paint-order="stroke" stroke-linejoin="round">54</text><text x="306.8" y="123.6" text-anchor="middle" font-size="7.6" font-weight="bold" fill="#111" stroke="#fff" stroke-width="2" paint-order="stroke" stroke-linejoin="round">N/A</text><text x="291.0" y="135.6" text-anchor="middle" font-size="8.2" font-weight="bold" fill="#111" stroke="#fff" stroke-width="2" paint-order="stroke" stroke-linejoin="round">102</text><text x="297.3" y="146.3" text-anchor="middle" font-size="7.6" font-weight="bold" fill="#111" stroke="#fff" stroke-width="2" paint-order="stroke" stroke-linejoin="round">N/A</text><text x="302.4" y="151.3" text-anchor="middle" font-size="8.2" font-weight="bold" fill="#111" stroke="#fff" stroke-width="2" paint-order="stroke" stroke-linejoin="round">165</text><text x="306.2" y="158.2" text-anchor="middle" font-size="8.2" font-weight="bold" fill="#111" stroke="#fff" stroke-width="2" paint-order="stroke" stroke-linejoin="round">114</text><text x="333.2" y="167.1" text-anchor="middle" font-size="8.2" font-weight="bold" fill="#111" stroke="#fff" stroke-width="2" paint-order="stroke" stroke-linejoin="round">173</text><text x="321.3" y="160.1" text-anchor="middle" font-size="8.2" font-weight="bold" fill="#111" stroke="#fff" stroke-width="2" paint-order="stroke" stroke-linejoin="round">131</text><text x="327.6" y="170.9" text-anchor="middle" font-size="8.2" font-weight="bold" fill="#111" stroke="#fff" stroke-width="2" paint-order="stroke" stroke-linejoin="round">177</text><text x="297.5" y="178.5" text-anchor="middle" font-size="8.2" font-weight="bold" fill="#111" stroke="#fff" stroke-width="2" paint-order="stroke" stroke-linejoin="round">160</text><text x="313.1" y="188.8" text-anchor="middle" font-size="8.2" font-weight="bold" fill="#111" stroke="#fff" stroke-width="2" paint-order="stroke" stroke-linejoin="round">56</text><text x="310.2" y="181.4" text-anchor="middle" font-size="8.2" font-weight="bold" fill="#111" stroke="#fff" stroke-width="2" paint-order="stroke" stroke-linejoin="round">83</text><text x="312.3" y="201.5" text-anchor="middle" font-size="7.6" font-weight="bold" fill="#111" stroke="#fff" stroke-width="2" paint-order="stroke" stroke-linejoin="round">N/A</text><text x="342.9" y="182.5" text-anchor="middle" font-size="8.2" font-weight="bold" fill="#111" stroke="#fff" stroke-width="2" paint-order="stroke" stroke-linejoin="round">68</text><text x="363.0" y="113.0" text-anchor="middle" font-size="8.2" font-weight="bold" fill="#111" stroke="#fff" stroke-width="2" paint-order="stroke" stroke-linejoin="round">159</text><text x="380.0" y="132.5" text-anchor="middle" font-size="8.2" font-weight="bold" fill="#111" stroke="#fff" stroke-width="2" paint-order="stroke" stroke-linejoin="round">177</text><text x="395.1" y="128.1" text-anchor="middle" font-size="8.2" font-weight="bold" fill="#111" stroke="#fff" stroke-width="2" paint-order="stroke" stroke-linejoin="round">173</text><text x="390.7" y="153.3" text-anchor="middle" font-size="8.2" font-weight="bold" fill="#111" stroke="#fff" stroke-width="2" paint-order="stroke" stroke-linejoin="round">60</text><text x="375.6" y="169.2" text-anchor="middle" font-size="7.6" font-weight="bold" fill="#111" stroke="#fff" stroke-width="2" paint-order="stroke" stroke-linejoin="round">N/A</text><text x="361.2" y="173.6" text-anchor="middle" font-size="8.2" font-weight="bold" fill="#111" stroke="#fff" stroke-width="2" paint-order="stroke" stroke-linejoin="round">92</text><text x="355.5" y="180.0" text-anchor="middle" font-size="8.2" font-weight="bold" fill="#111" stroke="#fff" stroke-width="2" paint-order="stroke" stroke-linejoin="round">76</text><text x="363.1" y="193.8" text-anchor="middle" font-size="8.2" font-weight="bold" fill="#111" stroke="#fff" stroke-width="2" paint-order="stroke" stroke-linejoin="round">79</text><text x="363.1" y="226.9" text-anchor="middle" font-size="8.2" font-weight="bold" fill="#111" stroke="#fff" stroke-width="2" paint-order="stroke" stroke-linejoin="round">41</text></svg><div id="popup" class="a" style="left:269px;top:13.5px;width:106px;height:92px;background:#fff;border-radius:7px;box-shadow:0 1px 4px rgba(0,0,0,0.35)">
  <div class="a" style="left:0;top:10px;width:106px;text-align:center;font-size:9px;line-height:10.4px;color:#222">Bishkek<br>2022-01-07 6:00 PM<br>(LT)</div>
  <div class="a" style="left:10px;top:41.5px;width:86px;height:41px;border:1px solid #0b3d6e;background:#fff">
    <div class="a" style="left:0;top:0;width:84px;height:19px;background:#044a86"></div>
    <div class="a" style="left:0;top:4px;width:54px;text-align:center;color:#fff;font-weight:bold;font-size:9.2px">Pollutant</div>
    <div class="a" style="left:54px;top:4px;width:30px;text-align:center;color:#fff;font-weight:bold;font-size:9.2px">AQI</div>
    <div class="a" style="left:53px;top:19px;width:31px;height:20px;background:#ffff00;border-left:1px solid #0b3d6e"></div>
    <div class="a" style="left:0;top:24px;width:54px;text-align:center;color:#333;font-size:9.2px">PM2.5</div>
    <div class="a" style="left:54px;top:24px;width:30px;text-align:center;color:#333;font-size:9.2px">89</div>
  </div>
</div>
<div class="a" style="left:295px;top:104px;width:13px;height:8px;overflow:hidden"><div style="width:9px;height:9px;background:#fff;transform:translate(2px,-5px) rotate(45deg);box-shadow:0 1px 3px rgba(0,0,0,0.3)"></div></div></div>

<div class="a sh" style="left:501px;top:6px;width:222px;height:23px">Select a City</div>
<div class="a sel" style="left:500px;top:30px;width:224px;height:25px;line-height:22px">Bishkek</div>
<svg class="a" style="left:697px;top:38px" width="8" height="8"><path d="M2,2L6,6M6,2L2,6" stroke="#999" stroke-width="0.9"/></svg>
<div class="a arr" style="left:710px;top:40px"></div>

<div class="a sh" style="left:501px;top:69px;width:222px;height:24px;line-height:22.5px">Select a Parameter</div>
<div class="a sel" style="left:500px;top:93px;width:224px;height:25px;line-height:23px">PM2.5</div>
<svg class="a" style="left:697px;top:101px" width="8" height="8"><path d="M2,2L6,6M6,2L2,6" stroke="#999" stroke-width="0.9"/></svg>
<div class="a arr" style="left:710px;top:103px"></div>

<div id="rss" class="a">
  <div class="a" style="left:7.5px;top:6px;font-size:9.1px;font-weight:bold;color:#444">Bishkek</div>
  <svg class="a" style="left:192px;top:17px" width="23" height="23"><rect width="23" height="23" fill="#efb043"/><circle cx="6" cy="17" r="2.4" fill="#fff"/><path d="M4,10.5A8.5,8.5 0 0 1 12.5,19" stroke="#fff" stroke-width="2.6" fill="none"/><path d="M4,5A14,14 0 0 1 18,19" stroke="#fff" stroke-width="2.6" fill="none"/></svg>
</div>
<div id="note" class="a">Note: Values above 500 are considered Beyond the AQI. Follow recommendations for the Hazardous category. Additional information on reducing exposure to extremely high levels of particle pollution is available <b>here</b>.</div>

<div class="a tab" style="left:11px;width:72px;background:#fff;border:1px solid #999;border-top:2px solid #044a86;border-bottom:none;border-radius:3px 3px 0 0;color:#333;line-height:19px">AQI</div>
<div class="a tab" style="left:85px;width:111px;background:#d0d0d0;border-radius:3px 3px 0 0;line-height:23px">Concentration</div>
<div class="a tab" style="left:198px;width:92px;background:#d0d0d0;border-radius:3px 3px 0 0;line-height:23px">Historical</div>
<div id="tabline" class="a"></div>
<div id="learn" class="a">Learn more about how the Air Quality Index [AQI] is calculated from the EPA <b>here</b>.</div>

<div id="chart" class="a"><svg class="a" style="left:0;top:0" width="534" height="263">
<rect x="49.5" y="138.42" width="478.1" height="1" fill="#e6e6e6"/>
<text x="39.7" y="141.4" text-anchor="end" font-size="7" font-weight="bold" fill="#222" letter-spacing="0.3">100</text>
<rect x="49.5" y="113.84" width="478.1" height="1" fill="#e6e6e6"/>
<text x="39.7" y="116.8" text-anchor="end" font-size="7" font-weight="bold" fill="#222" letter-spacing="0.3">200</text>
<rect x="49.5" y="89.26" width="478.1" height="1" fill="#e6e6e6"/>
<text x="39.7" y="92.3" text-anchor="end" font-size="7" font-weight="bold" fill="#222" letter-spacing="0.3">300</text>
<rect x="49.5" y="64.68" width="478.1" height="1" fill="#e6e6e6"/>
<text x="39.7" y="67.7" text-anchor="end" font-size="7" font-weight="bold" fill="#222" letter-spacing="0.3">400</text>
<rect x="49.5" y="40.10" width="478.1" height="1" fill="#e6e6e6"/>
<text x="39.7" y="43.1" text-anchor="end" font-size="7" font-weight="bold" fill="#222" letter-spacing="0.3">500</text>
<text x="39.7" y="166.0" text-anchor="end" font-size="7" font-weight="bold" fill="#222">0</text>
<rect x="55.14" y="130.07" width="10.6" height="33.43" fill="#ff7e00" stroke="#3a3a3a" stroke-width="0.9"/>
<rect x="75.02" y="126.63" width="10.6" height="36.87" fill="#ff7e00" stroke="#3a3a3a" stroke-width="0.9"/>
<rect x="94.90" y="124.66" width="10.6" height="38.84" fill="#ff0000" stroke="#3a3a3a" stroke-width="0.9"/>
<rect x="114.78" y="124.17" width="10.6" height="39.33" fill="#ff0000" stroke="#3a3a3a" stroke-width="0.9"/>
<rect x="134.66" y="124.17" width="10.6" height="39.33" fill="#ff0000" stroke="#3a3a3a" stroke-width="0.9"/>
<rect x="154.54" y="123.43" width="10.6" height="40.07" fill="#ff0000" stroke="#3a3a3a" stroke-width="0.9"/>
<rect x="174.41" y="124.66" width="10.6" height="38.84" fill="#ff0000" stroke="#3a3a3a" stroke-width="0.9"/>
<rect x="194.29" y="126.14" width="10.6" height="37.36" fill="#ff0000" stroke="#3a3a3a" stroke-width="0.9"/>
<rect x="214.17" y="133.27" width="10.6" height="30.23" fill="#ff7e00" stroke="#3a3a3a" stroke-width="0.9"/>
<rect x="234.05" y="125.40" width="10.6" height="38.10" fill="#ff0000" stroke="#3a3a3a" stroke-width="0.9"/>
<rect x="253.93" y="125.40" width="10.6" height="38.10" fill="#ff0000" stroke="#3a3a3a" stroke-width="0.9"/>
<rect x="273.81" y="124.66" width="10.6" height="38.84" fill="#ff0000" stroke="#3a3a3a" stroke-width="0.9"/>
<rect x="293.69" y="125.40" width="10.6" height="38.10" fill="#ff0000" stroke="#3a3a3a" stroke-width="0.9"/>
<rect x="313.57" y="130.07" width="10.6" height="33.43" fill="#ff7e00" stroke="#3a3a3a" stroke-width="0.9"/>
<rect x="333.45" y="136.46" width="10.6" height="27.04" fill="#ff7e00" stroke="#3a3a3a" stroke-width="0.9"/>
<rect x="353.33" y="137.20" width="10.6" height="26.30" fill="#ff7e00" stroke="#3a3a3a" stroke-width="0.9"/>
<rect x="373.21" y="135.23" width="10.6" height="28.27" fill="#ff7e00" stroke="#3a3a3a" stroke-width="0.9"/>
<rect x="393.09" y="133.27" width="10.6" height="30.23" fill="#ff7e00" stroke="#3a3a3a" stroke-width="0.9"/>
<rect x="412.96" y="140.39" width="10.6" height="23.11" fill="#ffff00" stroke="#3a3a3a" stroke-width="0.9"/>
<rect x="432.84" y="145.80" width="10.6" height="17.70" fill="#ffff00" stroke="#3a3a3a" stroke-width="0.9"/>
<rect x="452.72" y="149.00" width="10.6" height="14.50" fill="#ffff00" stroke="#3a3a3a" stroke-width="0.9"/>
<rect x="472.60" y="148.26" width="10.6" height="15.24" fill="#ffff00" stroke="#3a3a3a" stroke-width="0.9"/>
<rect x="492.48" y="144.57" width="10.6" height="18.93" fill="#ffff00" stroke="#3a3a3a" stroke-width="0.9"/>
<rect x="512.36" y="141.62" width="10.6" height="21.88" fill="#ffff00" stroke="#3a3a3a" stroke-width="0.9"/>
<rect x="50.5" y="163.00" width="477.1" height="1" fill="#ccd6eb"/>
<rect x="50.00" y="163.50" width="1" height="6" fill="#ccd6eb"/>
<rect x="69.88" y="163.50" width="1" height="6" fill="#ccd6eb"/>
<rect x="89.76" y="163.50" width="1" height="6" fill="#ccd6eb"/>
<rect x="109.64" y="163.50" width="1" height="6" fill="#ccd6eb"/>
<rect x="129.52" y="163.50" width="1" height="6" fill="#ccd6eb"/>
<rect x="149.40" y="163.50" width="1" height="6" fill="#ccd6eb"/>
<rect x="169.28" y="163.50" width="1" height="6" fill="#ccd6eb"/>
<rect x="189.15" y="163.50" width="1" height="6" fill="#ccd6eb"/>
<rect x="209.03" y="163.50" width="1" height="6" fill="#ccd6eb"/>
<rect x="228.91" y="163.50" width="1" height="6" fill="#ccd6eb"/>
<rect x="248.79" y="163.50" width="1" height="6" fill="#ccd6eb"/>
<rect x="268.67" y="163.50" width="1" height="6" fill="#ccd6eb"/>
<rect x="288.55" y="163.50" width="1" height="6" fill="#ccd6eb"/>
<rect x="308.43" y="163.50" width="1" height="6" fill="#ccd6eb"/>
<rect x="328.31" y="163.50" width="1" height="6" fill="#ccd6eb"/>
<rect x="348.19" y="163.50" width="1" height="6" fill="#ccd6eb"/>
<rect x="368.07" y="163.50" width="1" height="6" fill="#ccd6eb"/>
<rect x="387.95" y="163.50" width="1" height="6" fill="#ccd6eb"/>
<rect x="407.82" y="163.50" width="1" height="6" fill="#ccd6eb"/>
<rect x="427.70" y="163.50" width="1" height="6" fill="#ccd6eb"/>
<rect x="447.58" y="163.50" width="1" height="6" fill="#ccd6eb"/>
<rect x="467.46" y="163.50" width="1" height="6" fill="#ccd6eb"/>
<rect x="487.34" y="163.50" width="1" height="6" fill="#ccd6eb"/>
<rect x="507.22" y="163.50" width="1" height="6" fill="#ccd6eb"/>
<rect x="527.10" y="163.50" width="1" height="6" fill="#ccd6eb"/>
<text transform="translate(62.44,175.50) rotate(-45)" text-anchor="end" font-size="7.9" fill="#666">7 PM</text>
<text transform="translate(82.32,175.50) rotate(-45)" text-anchor="end" font-size="7.9" fill="#666">8 PM</text>
<text transform="translate(102.20,175.50) rotate(-45)" text-anchor="end" font-size="7.9" fill="#666">9 PM</text>
<text transform="translate(122.08,175.50) rotate(-45)" text-anchor="end" font-size="7.9" fill="#666">10 PM</text>
<text transform="translate(141.96,175.50) rotate(-45)" text-anchor="end" font-size="7.9" fill="#666">11 PM</text>
<text transform="translate(161.84,175.50) rotate(-45)" text-anchor="end" font-size="7.9" fill="#666">Jan 07, 2022 12 AM</text>
<text transform="translate(181.71,175.50) rotate(-45)" text-anchor="end" font-size="7.9" fill="#666">1 AM</text>
<text transform="translate(201.59,175.50) rotate(-45)" text-anchor="end" font-size="7.9" fill="#666">2 AM</text>
<text transform="translate(221.47,175.50) rotate(-45)" text-anchor="end" font-size="7.9" fill="#666">3 AM</text>
<text transform="translate(241.35,175.50) rotate(-45)" text-anchor="end" font-size="7.9" fill="#666">4 AM</text>
<text transform="translate(261.23,175.50) rotate(-45)" text-anchor="end" font-size="7.9" fill="#666">5 AM</text>
<text transform="translate(281.11,175.50) rotate(-45)" text-anchor="end" font-size="7.9" fill="#666">6 AM</text>
<text transform="translate(300.99,175.50) rotate(-45)" text-anchor="end" font-size="7.9" fill="#666">7 AM</text>
<text transform="translate(320.87,175.50) rotate(-45)" text-anchor="end" font-size="7.9" fill="#666">8 AM</text>
<text transform="translate(340.75,175.50) rotate(-45)" text-anchor="end" font-size="7.9" fill="#666">9 AM</text>
<text transform="translate(360.63,175.50) rotate(-45)" text-anchor="end" font-size="7.9" fill="#666">10 AM</text>
<text transform="translate(380.51,175.50) rotate(-45)" text-anchor="end" font-size="7.9" fill="#666">11 AM</text>
<text transform="translate(400.39,175.50) rotate(-45)" text-anchor="end" font-size="7.9" fill="#666">12 PM</text>
<text transform="translate(420.26,175.50) rotate(-45)" text-anchor="end" font-size="7.9" fill="#666">1 PM</text>
<text transform="translate(440.14,175.50) rotate(-45)" text-anchor="end" font-size="7.9" fill="#666">2 PM</text>
<text transform="translate(460.02,175.50) rotate(-45)" text-anchor="end" font-size="7.9" fill="#666">3 PM</text>
<text transform="translate(479.90,175.50) rotate(-45)" text-anchor="end" font-size="7.9" fill="#666">4 PM</text>
<text transform="translate(499.78,175.50) rotate(-45)" text-anchor="end" font-size="7.9" fill="#666">5 PM</text>
<text transform="translate(519.66,175.50) rotate(-45)" text-anchor="end" font-size="7.9" fill="#666">6 PM</text>
<text transform="translate(20.4,98.6) rotate(-90)" text-anchor="middle" font-size="8.5" fill="#333">AQI</text>
<text x="267" y="16.1" text-anchor="middle" font-size="11.8" fill="#333" letter-spacing="0.45">Bishkek - PM2.5</text>
<rect x="251.2" y="240.2" width="11" height="7.5" rx="1" fill="#ccc"/>
<text x="265.3" y="246.9" font-size="8" font-weight="bold" fill="#333">AQI</text>
</svg></div>

<div id="cc" class="a">
  <div id="cch" class="a">
    <div style="font-size:10px;margin-top:5px;line-height:12px">Current Conditions</div>
    <div style="font-size:8.6px;line-height:16px;letter-spacing:-0.2px">observed at</div>
    <div style="font-size:10px;line-height:13px">Jan 7, 2022 6:00 PM (LT)</div>
  </div>
  <div id="ccy" class="a">
    <div style="margin-top:10px;line-height:19px">89 AQI</div>
    <div style="line-height:19px">Moderate</div>
    <div style="line-height:19px">PM2.5</div>
  </div>
  <div class="a" style="left:0;top:135px;width:166px;text-align:center;font-size:8px;font-weight:bold;color:#222">Health Message</div>
  <div class="a" style="left:3px;top:150px;width:164px;font-size:8px;line-height:14.2px;color:#555">The AQI is between 51 and 100. Air quality is<br>acceptable; however, pollution in this range<br>may pose a moderate health concern for a<br>very small number of individuals. People<br>who are unusually sensitive to ozone or<br>particle pollution may experience respiratory<br>symptoms.</div>
</div>
<div class="a" style="left:556px;top:632px;font-size:7.3px;color:#555;white-space:nowrap">Note: Values above 500 are considered Beyond the AQI. Follow</div>
</body></html>
